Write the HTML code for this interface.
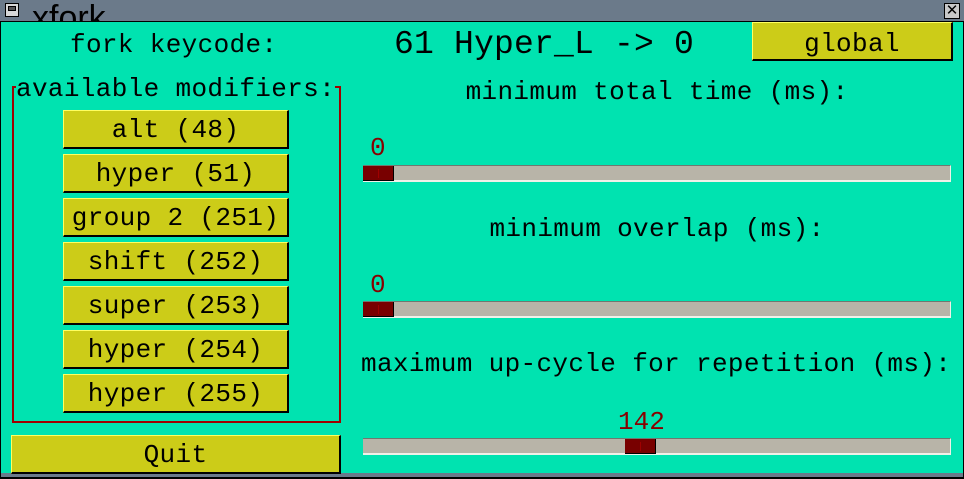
<!DOCTYPE html>
<html><head><style>
*{margin:0;padding:0;box-sizing:border-box}
body{width:964px;height:479px;overflow:hidden;background:#000;position:relative;font-family:"Liberation Mono","DejaVu Sans Mono",monospace}
.t{position:absolute;left:0;top:0;width:964px;height:22px;background:#6b7a8a;overflow:hidden;border-bottom:1px solid #000}
.win{position:absolute;left:1px;top:22px;width:962px;height:451px;background:#00e3b0}
.bot{position:absolute;left:1px;top:473px;width:962px;height:4px;background:#6b7a8a}
.a{position:absolute;white-space:pre;color:#000;font-size:26px;line-height:30px;letter-spacing:0.35px}
.btn{position:absolute;background:#cccc18;border-top:1px solid #ffff60;border-left:1px solid #ffff60;border-bottom:2px solid #000;border-right:2px solid #000;text-align:center;font-size:26px;line-height:38px;color:#000;letter-spacing:0.35px}
.tr{position:absolute;left:363px;width:588px;height:17px;background:#b8b4a8;border-top:1px solid #707870;border-bottom:2px solid #f0f0e8;border-right:1px solid #f0f0e8}
.th{position:absolute;top:0;width:31px;height:15px;background:#780000;border-right:1px solid #000;border-bottom:1px solid #000}
.th:after{content:"";position:absolute;left:15px;top:3px;width:1px;height:9px;background:#a00000}
.v{position:absolute;color:#880000;font-size:26px;line-height:30px}
</style></head><body>
<div class="t">
<div style="position:absolute;left:5px;top:3px;width:14px;height:14px;background:#d8d8d8;border:1px solid #000"><div style="position:absolute;left:2px;top:2px;width:8px;height:5px;background:#555;border:1px solid #000"></div></div>
<div style="position:absolute;left:32px;top:0px;font-family:'Liberation Sans',sans-serif;font-size:34px;line-height:36px;color:#000">xfork</div>
<div style="position:absolute;left:944px;top:3px;width:16px;height:16px;background:#c8c8c8;border:1px solid #000;font:15px/14px 'Liberation Sans',sans-serif;text-align:center">✕</div>
</div>
<div class="win"></div>
<div class="bot"></div>
<div class="a" style="left:70px;top:30px">fork keycode:</div>
<div class="a" style="left:394px;top:26px;font-size:33px;line-height:38px;letter-spacing:0.2px">61 Hyper_L -&gt; 0</div>
<div class="btn" style="left:752px;top:22px;width:201px;height:39px;line-height:42px">global</div>
<div style="position:absolute;left:12px;top:86px;width:329px;height:337px;border:2px solid #a00000"></div>
<div class="a" style="left:16px;top:74px;background:#00e3b0">available modifiers:</div>
<div class="btn" style="left:63px;top:110px;width:226px;height:39px">alt (48)</div>
<div class="btn" style="left:63px;top:154px;width:226px;height:39px">hyper (51)</div>
<div class="btn" style="left:63px;top:198px;width:226px;height:39px">group 2 (251)</div>
<div class="btn" style="left:63px;top:242px;width:226px;height:39px">shift (252)</div>
<div class="btn" style="left:63px;top:286px;width:226px;height:39px">super (253)</div>
<div class="btn" style="left:63px;top:330px;width:226px;height:39px">hyper (254)</div>
<div class="btn" style="left:63px;top:374px;width:226px;height:39px">hyper (255)</div>
<div class="btn" style="left:11px;top:435px;width:330px;height:39px">Quit</div>
<div class="a" style="left:363px;width:588px;text-align:center;top:77px">minimum total time (ms):</div>
<div class="v" style="left:370px;top:133px">0</div>
<div class="tr" style="top:165px"><div class="th" style="left:0"></div></div>
<div class="a" style="left:363px;width:588px;text-align:center;top:214px">minimum overlap (ms):</div>
<div class="v" style="left:370px;top:270px">0</div>
<div class="tr" style="top:301px"><div class="th" style="left:0"></div></div>
<div class="a" style="left:361px;top:349px">maximum up-cycle for repetition (ms):</div>
<div class="v" style="left:618px;top:407px">142</div>
<div class="tr" style="top:438px"><div class="th" style="left:262px"></div></div>
</body></html>
